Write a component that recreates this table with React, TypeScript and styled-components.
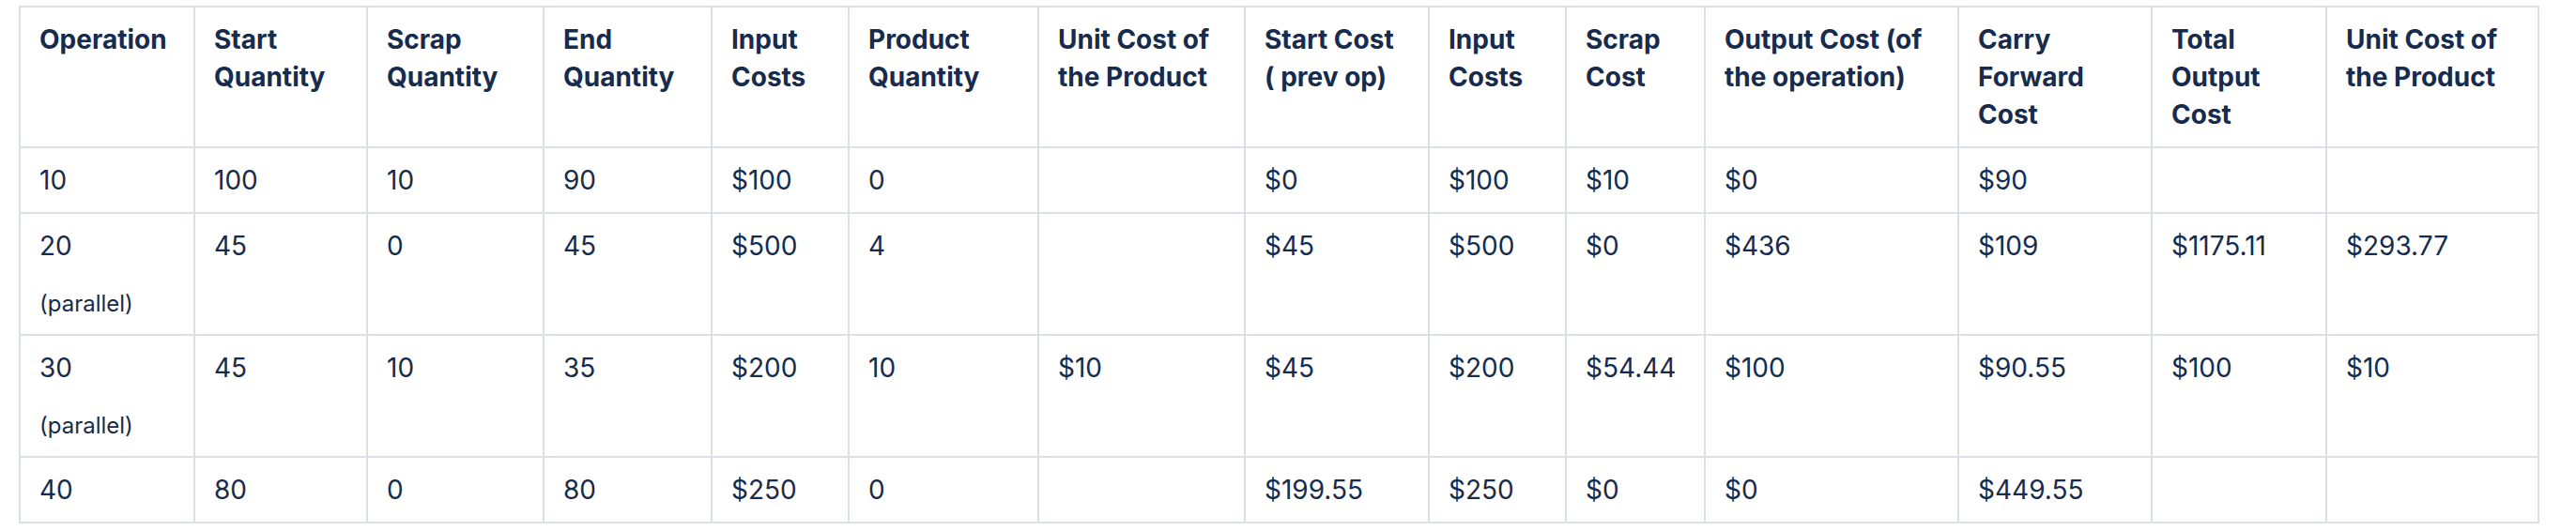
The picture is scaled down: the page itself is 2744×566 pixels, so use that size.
import React from "react";
import styled, { createGlobalStyle } from "styled-components";

const GlobalStyle = createGlobalStyle`
  html, body {
    margin: 0;
    padding: 0;
    background: #ffffff;
  }
  body {
    font-family: Inter, "Noto Sans", "Liberation Sans", sans-serif;
    color: #172b4d;
  }
  * { box-sizing: border-box; }
`;

const Page = styled.div`
  padding: 6px 0 0 20px;
`;

const Table = styled.table`
  border-collapse: separate;
  border-spacing: 0;
  table-layout: fixed;
  width: 2685px;
  border-top: 2px solid #dcdfe5;
  border-left: 2px solid #dcdfe5;
  font-size: 28px;
  line-height: 40px;
  color: #172b4d;
`;

const Cell = styled.td<{ $w?: number }>`
  ${(p) => (p.$w ? `width: ${p.$w}px;` : "")}
  padding: 14px 20px;
  border-right: 2px solid #dcdfe5;
  border-bottom: 2px solid #dcdfe5;
  vertical-align: top;
  text-align: left;
  font-weight: 400;
`;

const HeadCell = styled(Cell).attrs({ as: "th" })`
  font-weight: 700;
`;

const Note = styled.div`
  margin-top: 24px;
  font-size: 24px;
  line-height: 36px;
`;

const widths = [186, 184, 188, 179, 146, 202, 220, 196, 146, 148, 270, 206, 186, 226];

const headers = [
  "Operation",
  "Start Quantity",
  "Scrap Quantity",
  "End Quantity",
  "Input Costs",
  "Product Quantity",
  "Unit Cost of the Product",
  "Start Cost ( prev op)",
  "Input Costs",
  "Scrap Cost",
  "Output Cost (of the operation)",
  "Carry Forward Cost",
  "Total Output Cost",
  "Unit Cost of the Product",
];

type Row = { op: string; note?: string; values: string[] };

const rows: Row[] = [
  { op: "10", values: ["100", "10", "90", "$100", "0", "", "$0", "$100", "$10", "$0", "$90", "", ""] },
  {
    op: "20",
    note: "(parallel)",
    values: ["45", "0", "45", "$500", "4", "", "$45", "$500", "$0", "$436", "$109", "$1175.11", "$293.77"],
  },
  {
    op: "30",
    note: "(parallel)",
    values: ["45", "10", "35", "$200", "10", "$10", "$45", "$200", "$54.44", "$100", "$90.55", "$100", "$10"],
  },
  { op: "40", values: ["80", "0", "80", "$250", "0", "", "$199.55", "$250", "$0", "$0", "$449.55", "", ""] },
];

export default function App() {
  return (
    <>
      <GlobalStyle />
      <Page>
        <Table>
          <thead>
            <tr>
              {headers.map((h, i) => (
                <HeadCell key={i} $w={widths[i]}>
                  {h}
                </HeadCell>
              ))}
            </tr>
          </thead>
          <tbody>
            {rows.map((r, ri) => (
              <tr key={ri}>
                <Cell>
                  {r.op}
                  {r.note && <Note>{r.note}</Note>}
                </Cell>
                {r.values.map((v, vi) => (
                  <Cell key={vi}>{v}</Cell>
                ))}
              </tr>
            ))}
          </tbody>
        </Table>
      </Page>
    </>
  );
}
